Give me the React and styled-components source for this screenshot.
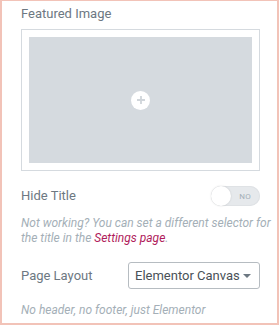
import styled, { createGlobalStyle } from "styled-components";

const Global = createGlobalStyle`
  html, body { margin: 0; padding: 0; background: #fff; }
  body { font-family: Roboto, "Noto Sans", Arial, sans-serif; }
`;

const Panel = styled.div`
  box-sizing: border-box;
  width: 279px;
  height: 325px;
  border: 2px solid #f2c3b8;
  border-top-width: 1px;
  padding: 5px 17px 0 19px;
`;

const Label = styled.div`
  font-size: 13px;
  color: #6d7882;
  line-height: 16px;
`;

const ImageFrame = styled.div`
  margin-top: 7px;
  border: 1px solid #d5dadf;
  padding: 7px;
  height: 126px;
`;

const ImageArea = styled.div`
  height: 100%;
  background: #d5dadf;
  display: flex;
  align-items: center;
  justify-content: center;
`;

const PlusCircle = styled.div`
  width: 19px;
  height: 19px;
  border-radius: 50%;
  background: #fff;
  display: flex;
  align-items: center;
  justify-content: center;
`;

const Row = styled.div`
  display: flex;
  align-items: center;
  justify-content: space-between;
  margin-top: ${(p) => p.$top}px;
`;

const Switch = styled.div`
  box-sizing: border-box;
  width: 49px;
  height: 20px;
  border-radius: 10px;
  background: #e6e9ec;
  box-shadow: inset 0 0 0 1px #dfe2e5;
  position: relative;
  display: flex;
  align-items: center;
  justify-content: flex-end;
  padding-right: 9px;
  font-size: 8px;
  color: #a4afb7;
  letter-spacing: 0.3px;
`;

const Knob = styled.span`
  position: absolute;
  left: 0;
  top: 0;
  width: 20px;
  height: 20px;
  border-radius: 50%;
  background: #fff;
  box-shadow: 0 0 2px rgba(0, 0, 0, 0.15);
`;

const Help = styled.p`
  width: 250px;
  margin: ${(p) => p.$top}px 0 0;
  font-size: 12px;
  line-height: 15px;
  font-style: italic;
  color: #a4afb7;
`;

const Link = styled.a`
  color: #b01b5c;
  text-decoration: none;
`;

const Select = styled.div`
  box-sizing: border-box;
  width: 132px;
  height: 27px;
  border: 1px solid #b6bcc1;
  border-radius: 3px;
  display: flex;
  align-items: center;
  justify-content: space-between;
  padding: 0 8px 0 6px;
  font-size: 13px;
  color: #495157;
`;

const Caret = styled.span`
  width: 0;
  height: 0;
  border-left: 4px solid transparent;
  border-right: 4px solid transparent;
  border-top: 4px solid #6d7882;
`;

export default function App() {
  return (
    <>
      <Global />
      <Panel>
        <Label>Featured Image</Label>
        <ImageFrame>
          <ImageArea>
            <PlusCircle>
              <svg width="10" height="10" viewBox="0 0 10 10">
                <path d="M5 1v8M1 5h8" stroke="#d0d5da" strokeWidth="1.8" />
              </svg>
            </PlusCircle>
          </ImageArea>
        </ImageFrame>
        <Row $top={15}>
          <Label>Hide Title</Label>
          <Switch>
            <Knob />
            NO
          </Switch>
        </Row>
        <Help $top={10}>
          Not working? You can set a different selector for the title in the{" "}
          <Link href="#">Settings page</Link>.
        </Help>
        <Row $top={16}>
          <Label>Page Layout</Label>
          <Select>
            Elementor Canvas
            <Caret />
          </Select>
        </Row>
        <Help $top={14}>No header, no footer, just Elementor</Help>
      </Panel>
    </>
  );
}
